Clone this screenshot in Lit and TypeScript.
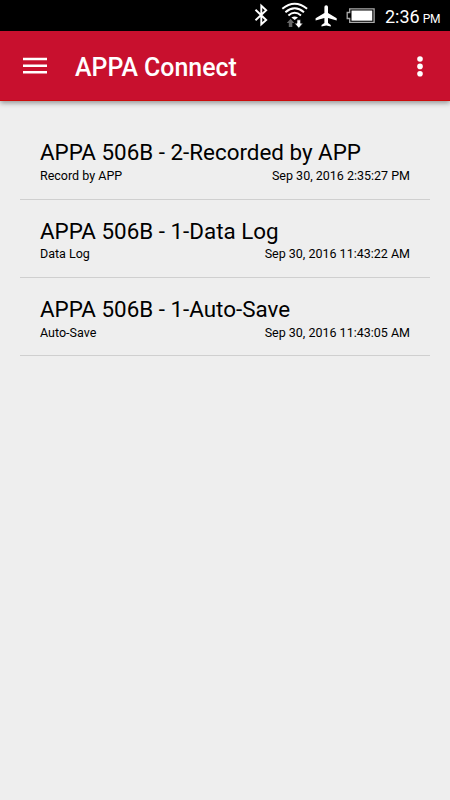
import { LitElement, html, css } from "lit";
import { customElement } from "lit/decorators.js";

const records = [
  { title: "APPA 506B - 2-Recorded by APP", kind: "Record by APP", time: "Sep 30, 2016 2:35:27 PM" },
  { title: "APPA 506B - 1-Data Log", kind: "Data Log", time: "Sep 30, 2016 11:43:22 AM" },
  { title: "APPA 506B - 1-Auto-Save", kind: "Auto-Save", time: "Sep 30, 2016 11:43:05 AM" },
];

@customElement("app-root")
class AppRoot extends LitElement {
  static styles = css`
    :host { display: flex; flex-direction: column; height: 800px; background: #eeeeee; color: #000; font-family: Roboto, sans-serif; overflow: hidden; }
    svg { display: block; flex: none; }
    .status { height: 31px; flex: none; background: #000; color: #fff; display: flex; align-items: center; justify-content: flex-end; }
    .clock { width: 65px; font-size: 18px; line-height: 32px; padding-top: 4px; white-space: nowrap; }
    .clock small { font-size: 12px; margin-left: 3px; letter-spacing: -0.4px; }
    .bar { height: 70px; flex: none; box-sizing: border-box; background: #c8102e; border-bottom: 1px solid #cc0c0c; box-shadow: 0 2px 5px rgba(0,0,0,.38); display: flex; align-items: center; padding: 0 20px 0 23px; color: #fff; }
    h1 { flex: 1; margin: 4px 0 0 28px; font-size: 24.9px; line-height: 32px; font-weight: 500; }
    .list { padding: 21px 20px 0; }
    .row { height: 78px; box-sizing: border-box; padding: 17px 20px 0; border-bottom: 1px solid #cfcfcf; }
    .row:first-child .title { margin: -1px 0 1px; }
    .title { font-size: 22.4px; line-height: 28px; white-space: nowrap; }
    .meta { display: flex; justify-content: space-between; font-size: 12.5px; line-height: 16px; padding-top: 1px; }
    .row:last-child .meta { padding-top: 2px; }
  `;

  render() {
    return html`
      <div class="status">
        <svg width="131" height="31" viewBox="0 0 131 31" fill="none">
          <path d="M1.5 9.7 12.2 20 7.3 24.3V5.7L12.2 10.2 1.5 20.3" stroke="#fff" stroke-width="1.9"/>
          <g stroke="#fff" stroke-width="2">
            <path d="M28.3 8.8Q40.7 -1.2 53.1 8.8"/>
            <path d="M31.4 12.2Q40.7 4.4 50 12.2"/>
            <path d="M34.4 15.4Q40.7 10.2 47 15.4"/>
          </g>
          <path d="M37.4 17.6Q40.7 15.3 44 17.6L40.7 20z" fill="#fff"/>
          <path d="M36.6 18.8 40.3 22.9H38.3V27H34.8V22.9H32.8z" fill="#666"/>
          <path d="M43 19.8H46.6V23.2H49L44.8 28.2 40.6 23.2H43z" fill="#fff" stroke="#000" stroke-width=".6"/>
          <path d="M82.7 20.6v-2.3L74 13V7.1a1.8 1.8 0 0 0-3.6 0V13L61.6 18.3v2.3l8.8-2.6v5l-2.9 2v1.6l4.7-1.2 4.6 1.2V25L74 23v-5z" fill="#fff"/>
          <path d="M95.7 8.8H120.1V22.3H95.7V18.5H93.2V12.5H95.7z" stroke="#aaa" stroke-width="1.3"/>
          <rect x="97.5" y="10.5" width="20.8" height="10.2" fill="#fff"/>
        </svg>
        <div class="clock">2:36<small>PM</small></div>
      </div>
      <header class="bar">
        <svg width="24" height="17" viewBox="0 0 24 17" fill="#fff"><path d="M0 .8h24v2.5H0zM0 7.4h24v2.5H0zM0 14h24v2.5H0z"/></svg>
        <h1>APPA Connect</h1>
        <svg width="20" height="24" viewBox="0 0 20 24" fill="#fff"><circle cx="10" cy="5" r="2.8"/><circle cx="10" cy="12.4" r="2.8"/><circle cx="10" cy="19.8" r="2.8"/></svg>
      </header>
      <main class="list">
        ${records.map((r) => html`
          <div class="row">
            <div class="title">${r.title}</div>
            <div class="meta"><span>${r.kind}</span><span>${r.time}</span></div>
          </div>`)}
      </main>
    `;
  }
}
